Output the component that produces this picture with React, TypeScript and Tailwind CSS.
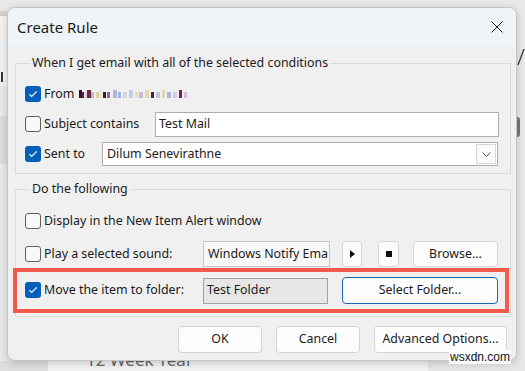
import { ReactNode } from 'react';

const FONT = "font-['Segoe_UI','Noto_Sans',sans-serif]";

function Box({ checked }: { checked: boolean }) {
    if (checked) {
        return (
            <span className="w-[16px] h-[16px] shrink-0 rounded-[3px] bg-[#005fb8] flex items-center justify-center">
                <svg width="10" height="8" viewBox="0 0 10 8">
                    <path d="M1.2 4.1 L3.7 6.5 L8.8 1.4" stroke="white" strokeWidth="1.1" fill="none" />
                </svg>
            </span>
        );
    }
    return <span className="w-[16px] h-[16px] shrink-0 rounded-[3px] border border-[#5f5f5f] bg-[#f9f9f9]" />;
}

function Btn({ children, className = '' }: { children: ReactNode; className?: string }) {
    return (
        <div className={`h-[27px] rounded-[4px] border border-[#d3d3d3] bg-[#fdfdfd] flex items-center justify-center text-[12.4px] text-[#1b1b1b] ${className}`}>
            {children}
        </div>
    );
}

// pixelated (redacted) sender name
const PIXELS = [
    ['#2d1330', 0, 3], ['#5a2a4a', 3, 2], ['#e7cfe0', 5, 3], ['#6b2a3a', 8, 4], ['#c9b4c8', 12, 3],
    ['#d9cfa0', 17, 3], ['#f1e6d4', 20, 4], ['#3a1e3e', 24, 3], ['#8c6a8a', 28, 3], ['#b0b8d8', 34, 4],
    ['#9cb6e0', 39, 3], ['#d8d0e0', 44, 4], ['#bfcde8', 50, 4], ['#eed8a8', 56, 3], ['#c8b8d8', 60, 4],
    ['#e8d8b0', 66, 4], ['#402040', 72, 3], ['#c0c4dc', 77, 4], ['#e2d0b8', 83, 3], ['#a6b8e0', 88, 4],
    ['#d8c8e0', 94, 4], ['#6b2850', 100, 3], ['#d0c0d8', 105, 3],
] as const;

function Redacted() {
    return (
        <svg width="110" height="9" viewBox="0 0 110 9">
            {PIXELS.map(([c, x, w], i) => (
                <rect key={i} x={x} y={i % 3 === 0 ? 0 : 2} width={w} height={i % 3 === 0 ? 8 : 6} fill={c} />
            ))}
        </svg>
    );
}

export default function App() {
    return (
        <div className={`w-[525px] h-[371px] overflow-hidden bg-[#e9e9e9] flex flex-col ${FONT}`}>
            <div className="h-[7px] shrink-0" />
            <div className="flex shrink-0">
                {/* behind the dialog, left */}
                <div className="w-[7px] shrink-0 flex flex-col">
                    <div className="h-[5px] bg-[#d2d2d2] mt-[4px]" />
                    <div className="h-[70px] bg-[#f3f3f3] flex items-end pb-[4px]">
                        <span className="w-[2px] h-[10px] ml-[1px] bg-[#333]" />
                    </div>
                    <div className="h-[48px] mt-[30px] bg-[#dcdcdc]" />
                </div>

                {/* dialog */}
                <div className="relative z-10 w-[510px] h-[354px] shrink-0 rounded-[8px] border border-[#c6c6c6] bg-[#f0f0f0] overflow-hidden shadow-[0_2px_8px_rgba(0,0,0,0.18)] flex flex-col">
                    <div className="h-[38px] shrink-0 bg-[#eef4f7] flex items-center justify-between pl-[9px] pr-[13px]">
                        <span className="text-[15px] text-[#1a1a1a]">Create Rule</span>
                        <svg width="12" height="12" viewBox="0 0 12 12">
                            <path d="M0.5 0.5 L11.5 11.5 M11.5 0.5 L0.5 11.5" stroke="#1a1a1a" strokeWidth="1" />
                        </svg>
                    </div>

                    {/* conditions */}
                    <div className="mt-[17px] ml-[7px] w-[496px] border border-[#dadada] pl-[9px] pb-[6px] text-[12.4px] text-[#1b1b1b]">
                        <div className="-mt-[10px] ml-[5px] w-fit px-[2px] bg-[#f0f0f0] leading-[18px]">
                            When I get email with all of the selected conditions
                        </div>
                        <div className="pt-[9px] flex flex-col gap-[4px]">
                            <div className="h-[26px] flex items-center">
                                <Box checked />
                                <span className="ml-[3px]">From</span>
                                <span className="ml-[5px] mt-[1px]"><Redacted /></span>
                            </div>
                            <div className="h-[26px] flex items-center">
                                <div className="w-[130px] flex items-center">
                                    <Box checked={false} />
                                    <span className="ml-[3px]">Subject contains</span>
                                </div>
                                <div className="w-[344px] h-[25px] border border-[#adadad] bg-white flex items-center pl-[3px]">
                                    Test Mail
                                </div>
                            </div>
                            <div className="h-[26px] flex items-center">
                                <div className="w-[77px] flex items-center">
                                    <Box checked />
                                    <span className="ml-[3px]">Sent to</span>
                                </div>
                                <div className="w-[396px] h-[24px] border border-[#adadad] bg-white flex items-center justify-between pl-[4px] pr-[1px]">
                                    <span>Dilum Senevirathne</span>
                                    <div className="w-[20px] h-[20px] border border-[#d6d6d6] bg-[#fbfbfb] flex items-center justify-center">
                                        <svg width="9" height="5" viewBox="0 0 9 5">
                                            <path d="M0.5 0.5 L4.5 4.5 L8.5 0.5" stroke="#444" strokeWidth="0.9" fill="none" />
                                        </svg>
                                    </div>
                                </div>
                            </div>
                        </div>
                    </div>

                    {/* actions */}
                    <div className="mt-[15px] ml-[7px] w-[496px] border border-[#dadada] pl-[9px] pb-[3px] text-[12.4px] text-[#1b1b1b]">
                        <div className="-mt-[10px] ml-[5px] w-fit px-[2px] bg-[#f0f0f0] leading-[18px]">
                            Do the following
                        </div>
                        <div className="pt-[10px] h-[36px] flex items-center">
                            <Box checked={false} />
                            <span className="ml-[3px]">Display in the New Item Alert window</span>
                        </div>
                        <div className="mt-[7px] h-[26px] flex items-center">
                            <div className="w-[178px] flex items-center">
                                <Box checked={false} />
                                <span className="ml-[3px]">Play a selected sound:</span>
                            </div>
                            <div className="w-[127px] h-[26px] border border-[#c4c4c4] bg-[#f7f7f7] flex items-center pl-[4px] overflow-hidden whitespace-nowrap">
                                <span className="shrink-0">Windows Notify Ema</span>
                            </div>
                            <Btn className="ml-[12px] w-[20px] !h-[26px]">
                                <svg width="5" height="8" viewBox="0 0 5 8"><path d="M0 0 L5 4 L0 8 Z" fill="#111" /></svg>
                            </Btn>
                            <Btn className="ml-[16px] w-[21px] !h-[26px]">
                                <span className="w-[6px] h-[6px] bg-[#111]" />
                            </Btn>
                            <Btn className="ml-[14px] w-[85px] !h-[26px]">Browse...</Btn>
                        </div>
                        <div className="mt-[1px] -ml-[12px] w-[496px] h-[45px] border-4 border-[#f25a4b] pl-[8px] flex items-center">
                            <div className="w-[178px] flex items-center">
                                <Box checked />
                                <span className="ml-[3px]">Move the item to folder:</span>
                            </div>
                            <div className="w-[125px] h-[26px] border border-[#a2a2a2] bg-[#e6e6e6] flex items-center pl-[3px]">
                                Test Folder
                            </div>
                            <Btn className="ml-[14px] w-[156px] !border-[#1a65b8]">Select Folder...</Btn>
                        </div>
                    </div>

                    <div className="mt-[9px] flex justify-end gap-[14px] pr-[9px]">
                        <Btn className="w-[84px]">OK</Btn>
                        <Btn className="w-[84px]">Cancel</Btn>
                        <Btn className="w-[133px]">Advanced Options...</Btn>
                    </div>
                </div>

                {/* behind the dialog, right */}
                <div className="flex-1 flex flex-col overflow-hidden">
                    <svg className="mt-[42px]" width="8" height="16" viewBox="0 0 8 16">
                        <path d="M1 16 L7 0" stroke="#333" strokeWidth="1.3" />
                    </svg>
                    <div className="mt-[52px] w-[3px] h-[20px] rounded-r-full bg-[#777]" />
                </div>
            </div>

            {/* behind the dialog, bottom */}
            <div className="flex-1 flex">
                <div className="w-[48px] bg-[#dedede]" />
                <div className="w-[380px] bg-[#f2f2f2] pl-[38px] overflow-hidden">
                    <div className="-mt-[10px] text-[17px] leading-[18px] text-[#666]">12 Week Year</div>
                </div>
                <div className="flex-1 bg-[#e6e6e6] flex justify-end pr-[14px]">
                    <span className="relative z-20 -mt-[11px] h-[14px] bg-white/90 text-[12px] leading-[14px] text-[#111] px-[1px] whitespace-nowrap font-['Liberation_Sans',sans-serif]">wsxdn.com</span>
                </div>
            </div>
        </div>
    );
}
